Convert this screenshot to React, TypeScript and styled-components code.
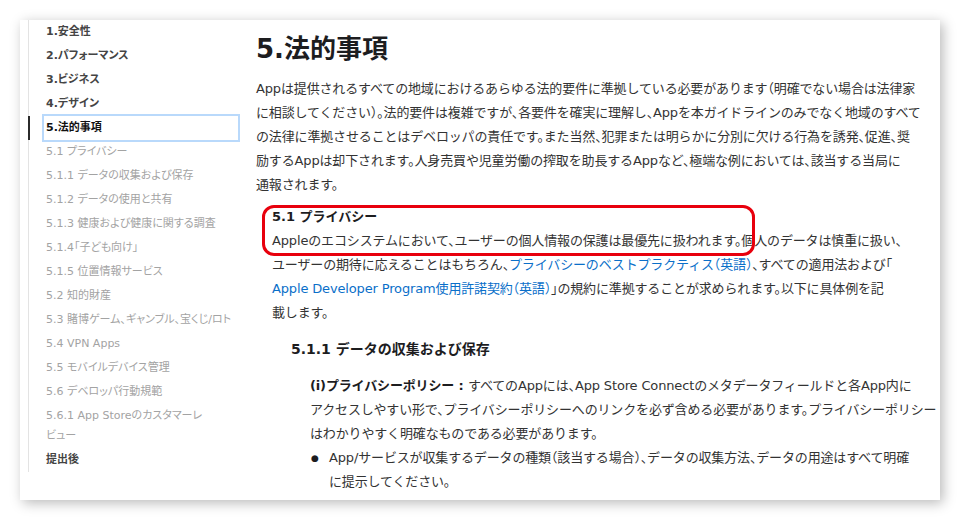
import styled, { createGlobalStyle, css } from 'styled-components';

/*
 * Types
 */

type NavEntry = {
  label: string;
  chapter?: boolean;
  active?: boolean;
};

// Long labels carry their line break, as the sidebar shows them
const navEntries: NavEntry[] = [
  { label: '1.安全性', chapter: true },
  { label: '2.パフォーマンス', chapter: true },
  { label: '3.ビジネス', chapter: true },
  { label: '4.デザイン', chapter: true },
  { label: '5.法的事項', chapter: true, active: true },
  { label: '5.1 プライバシー' },
  { label: '5.1.1 データの収集および保存' },
  { label: '5.1.2 データの使用と共有' },
  { label: '5.1.3 健康および健康に関する調査' },
  { label: '5.1.4「子ども向け」' },
  { label: '5.1.5 位置情報サービス' },
  { label: '5.2 知的財産' },
  { label: '5.3 賭博ゲーム、ギャンブル、宝くじ/ロト' },
  { label: '5.4 VPN Apps' },
  { label: '5.5 モバイルデバイス管理' },
  { label: '5.6 デベロッパ行動規範' },
  { label: '5.6.1 App Storeのカスタマーレ\nビュー' },
  { label: '提出後', chapter: true },
];

/*
 * App
 */

export default function App() {
  return (
    <>
      <GlobalStyle />
      <Page>
        <Card lang="ja">
          <NavList>
            {navEntries.map((entry) => (
              <li key={entry.label}>
                <NavLink href="#" $chapter={entry.chapter} $active={entry.active}>
                  {entry.label}
                </NavLink>
              </li>
            ))}
          </NavList>

          <Main>
            <Title>5.法的事項</Title>
            <Paragraph>
              Appは提供されるすべての地域におけるあらゆる法的要件に準拠している必要があります（明確でない場合は法律家
              <br />
              に相談してください）。法的要件は複雑ですが、各要件を確実に理解し、Appを本ガイドラインのみでなく地域のすべて
              <br />
              の法律に準拠させることはデベロッパの責任です。また当然、犯罪または明らかに分別に欠ける行為を誘発、促進、奨
              <br />
              励するAppは却下されます。人身売買や児童労働の搾取を助長するAppなど、極端な例においては、該当する当局に
              <br />
              通報されます。
            </Paragraph>

            <Section>
              <Highlight />
              <SectionTitle>5.1 プライバシー</SectionTitle>
              <Paragraph>
                Appleのエコシステムにおいて、ユーザーの個人情報の保護は最優先に扱われます。個人のデータは慎重に扱い、
                <br />
                ユーザーの期待に応えることはもちろん、
                <Link href="#">プライバシーのベストプラクティス（英語）</Link>
                、すべての適用法および「
                <br />
                <Link href="#">Apple Developer Program使用許諾契約（英語）</Link>
                」の規約に準拠することが求められます。以下に具体例を記
                <br />
                載します。
              </Paragraph>

              <SubTitle>5.1.1 データの収集および保存</SubTitle>

              <Clause>
                <Paragraph>
                  <strong>(i)プライバシーポリシー : </strong>
                  すべてのAppには、App Store Connectのメタデータフィールドと各App内に
                  <br />
                  アクセスしやすい形で、プライバシーポリシーへのリンクを必ず含める必要があります。プライバシーポリシー
                  <br />
                  はわかりやすく明確なものである必要があります。
                </Paragraph>
                <BulletList>
                  <BulletItem>
                    <Dot>●</Dot>
                    <Paragraph>
                      App/サービスが収集するデータの種類（該当する場合）、データの収集方法、データの用途はすべて明確
                      <br />
                      に提示してください。
                    </Paragraph>
                  </BulletItem>
                </BulletList>
              </Clause>
            </Section>
          </Main>
        </Card>
      </Page>
    </>
  );
}

/*
 * Styles
 */

const GlobalStyle = createGlobalStyle`
  html, body {
    margin: 0;
    padding: 0;
    background: #ffffff;
  }
  body {
    font-family: "DejaVu Sans", "Noto Sans CJK JP", sans-serif;
    color: #333333;
  }
`;

const Page = styled.div`
  padding: 20px;
`;

const Card = styled.div`
  width: 920px;
  height: 480px;
  display: flex;
  align-items: flex-start;
  background: #ffffff;
  box-shadow: 3px 3px 12px rgba(0, 0, 0, 0.28);
  overflow: hidden;
`;

const NavList = styled.ul`
  list-style: none;
  margin: 0 0 0 8px;
  padding: 0 2px 0 15px;
  width: 194px;
  flex: 0 0 auto;
  border-left: 1px solid #e3e3e3;
`;

const NavLink = styled.a<{ $chapter?: boolean; $active?: boolean }>`
  position: relative;
  display: block;
  padding: 2px;
  font-size: 11px;
  line-height: 20px;
  font-feature-settings: 'palt';
  line-break: strict;
  white-space: pre-line;
  text-decoration: none;
  color: ${(p) => (p.$chapter ? '#444444' : '#a3a3a3')};
  font-weight: ${(p) => (p.$chapter ? 700 : 400)};

  ${(p) =>
    p.$active &&
    css`
      color: #111111;
      outline: 2px solid #b9d9fb;

      &::before {
        content: '';
        position: absolute;
        left: -16px;
        top: 0;
        width: 2px;
        height: 100%;
        background: #2b2b2b;
      }
    `}
`;

const Main = styled.main`
  flex: 1;
  min-width: 0;
  padding: 13px 12px 0 16px;
`;

const Title = styled.h1`
  margin: 0 0 12px;
  font-size: 26px;
  line-height: 32px;
  font-weight: 700;
  color: #1d1d1f;
`;

const Paragraph = styled.p`
  margin: 0;
  font-size: 13px;
  line-height: 24px;
  letter-spacing: -0.15px;
  white-space: nowrap;
  font-feature-settings: 'halt';

  strong {
    font-weight: 700;
    color: #1d1d1f;
  }
`;

const Link = styled.a`
  color: #0a6fc9;
  text-decoration: none;
`;

const Section = styled.section`
  position: relative;
  margin-top: 8px;
  padding-left: 16px;
`;

const Highlight = styled.div`
  position: absolute;
  top: 0;
  left: 6px;
  width: 493px;
  height: 51px;
  box-sizing: border-box;
  border: 3px solid #e8000d;
  border-radius: 12px;
  pointer-events: none;
`;

const SectionTitle = styled.h2`
  margin: 0;
  font-size: 13px;
  line-height: 24px;
  font-weight: 700;
  color: #1d1d1f;
`;

const SubTitle = styled.h3`
  margin: 12px 0 0;
  padding-left: 19px;
  font-size: 14px;
  line-height: 24px;
  font-weight: 700;
  color: #1d1d1f;
`;

const Clause = styled.div`
  margin-top: 13px;
  padding-left: 38px;
`;

const BulletList = styled.ul`
  list-style: none;
  margin: 0;
  padding: 0;
`;

const BulletItem = styled.li`
  display: flex;
`;

const Dot = styled.span`
  flex: 0 0 18px;
  padding-left: 1px;
  font-size: 9px;
  line-height: 24px;
  color: #1d1d1f;
`;
